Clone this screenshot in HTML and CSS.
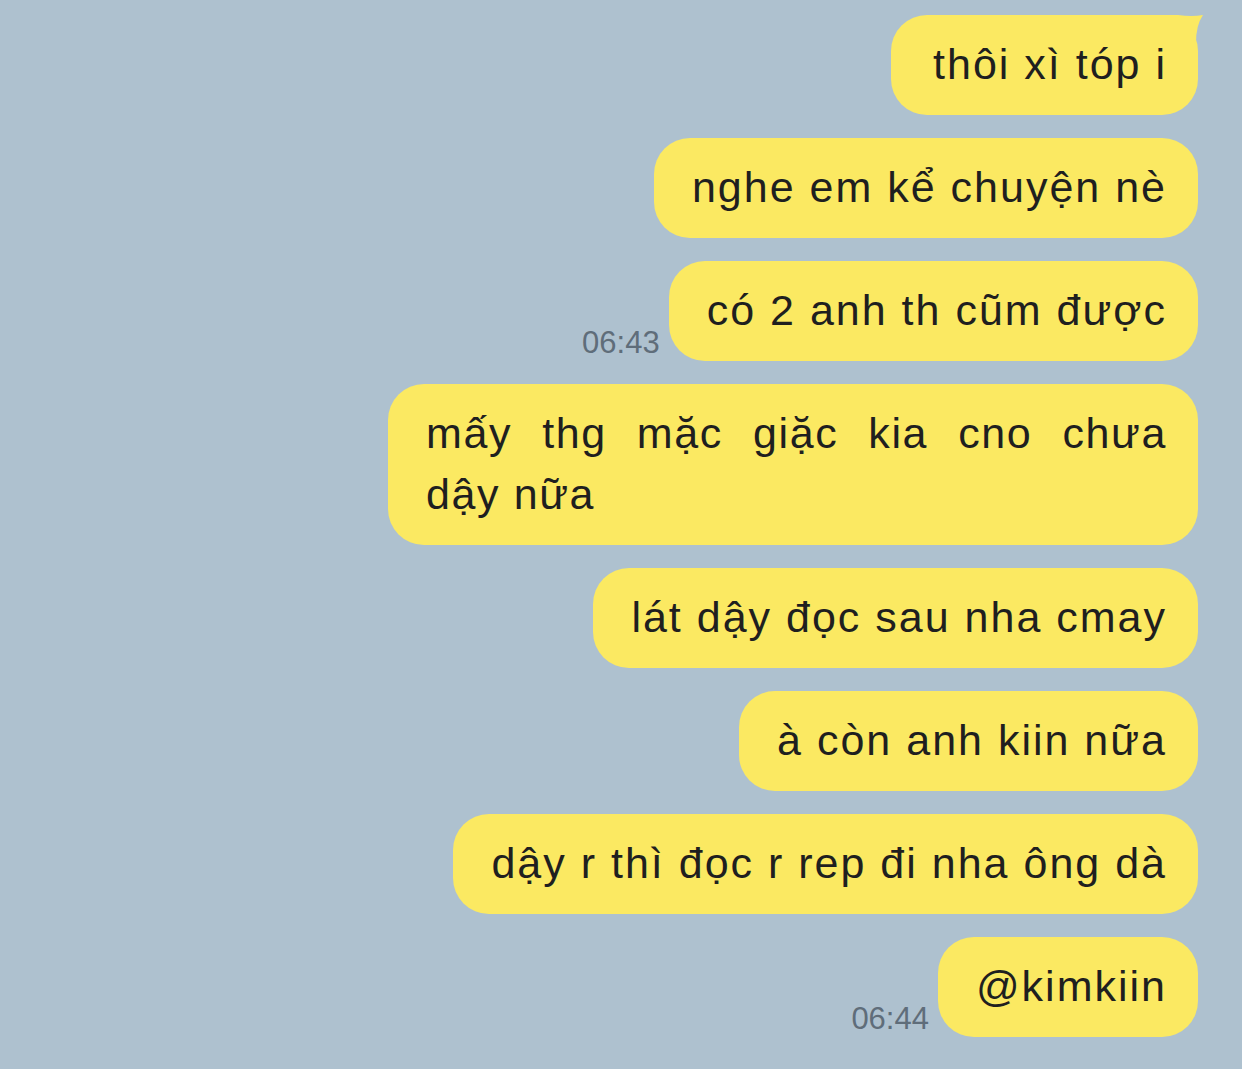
FILE: index.html
```html
<!DOCTYPE html>
<html>
<head>
    <meta charset="utf-8">
    <title>Chat</title>
    <link rel="stylesheet" href="styles.css">
</head>
<body>
<div class="chat">
    <div class="row">
        <div class="bubble first">
            <svg class="tail" width="46" height="40" viewBox="0 0 46 40">
                <path d="M0 2 H20 Q34 4 45 2 Q38 12 38 30 V40 H0 Z" fill="#fbe962"/>
            </svg>
            <span class="text">thôi xì tóp i</span>
        </div>
    </div>
    <div class="row">
        <div class="bubble">nghe em kể chuyện nè</div>
    </div>
    <div class="row">
        <span class="time">06:43</span>
        <div class="bubble">có 2 anh th cũm được</div>
    </div>
    <div class="row">
        <div class="bubble wide">mấy thg mặc giặc kia cno chưa dậy&nbsp;nữa</div>
    </div>
    <div class="row">
        <div class="bubble">lát dậy đọc sau nha cmay</div>
    </div>
    <div class="row">
        <div class="bubble">à còn anh kiin nữa</div>
    </div>
    <div class="row">
        <div class="bubble">dậy r thì đọc r rep đi nha ông dà</div>
    </div>
    <div class="row">
        <span class="time">06:44</span>
        <div class="bubble">@kimkiin</div>
    </div>
</div>
</body>
</html>
```

FILE: styles.css
```css
* {
    box-sizing: border-box;
}

html, body {
    margin: 0;
    padding: 0;
    min-height: 100vh;
    background: #aec1cf;
    font-family: "Liberation Sans", Arial, sans-serif;
}

.chat {
    display: flex;
    flex-direction: column;
    align-items: flex-end;
    gap: 23px;
    padding: 15px 44px 30px 20px;
}

.row {
    display: flex;
    align-items: flex-end;
    justify-content: flex-end;
    gap: 9px;
}

.bubble {
    position: relative;
    max-width: 810px;
    padding: 19px 31px 20px 38px;
    border-radius: 36px;
    background: #fbe962;
    color: #1f1f1f;
    font-size: 43px;
    line-height: 61px;
    letter-spacing: 2px;
    text-align: justify;
}

.bubble.first {
    padding-left: 42px;
}

.bubble.wide {
    letter-spacing: 1.6px;
}

.bubble .text {
    position: relative;
    z-index: 1;
}

.tail {
    position: absolute;
    top: -2px;
    right: -6px;
    z-index: 0;
}

.time {
    margin-bottom: 3px;
    font-size: 31px;
    line-height: 31px;
    color: #5f6d7a;
}
```
